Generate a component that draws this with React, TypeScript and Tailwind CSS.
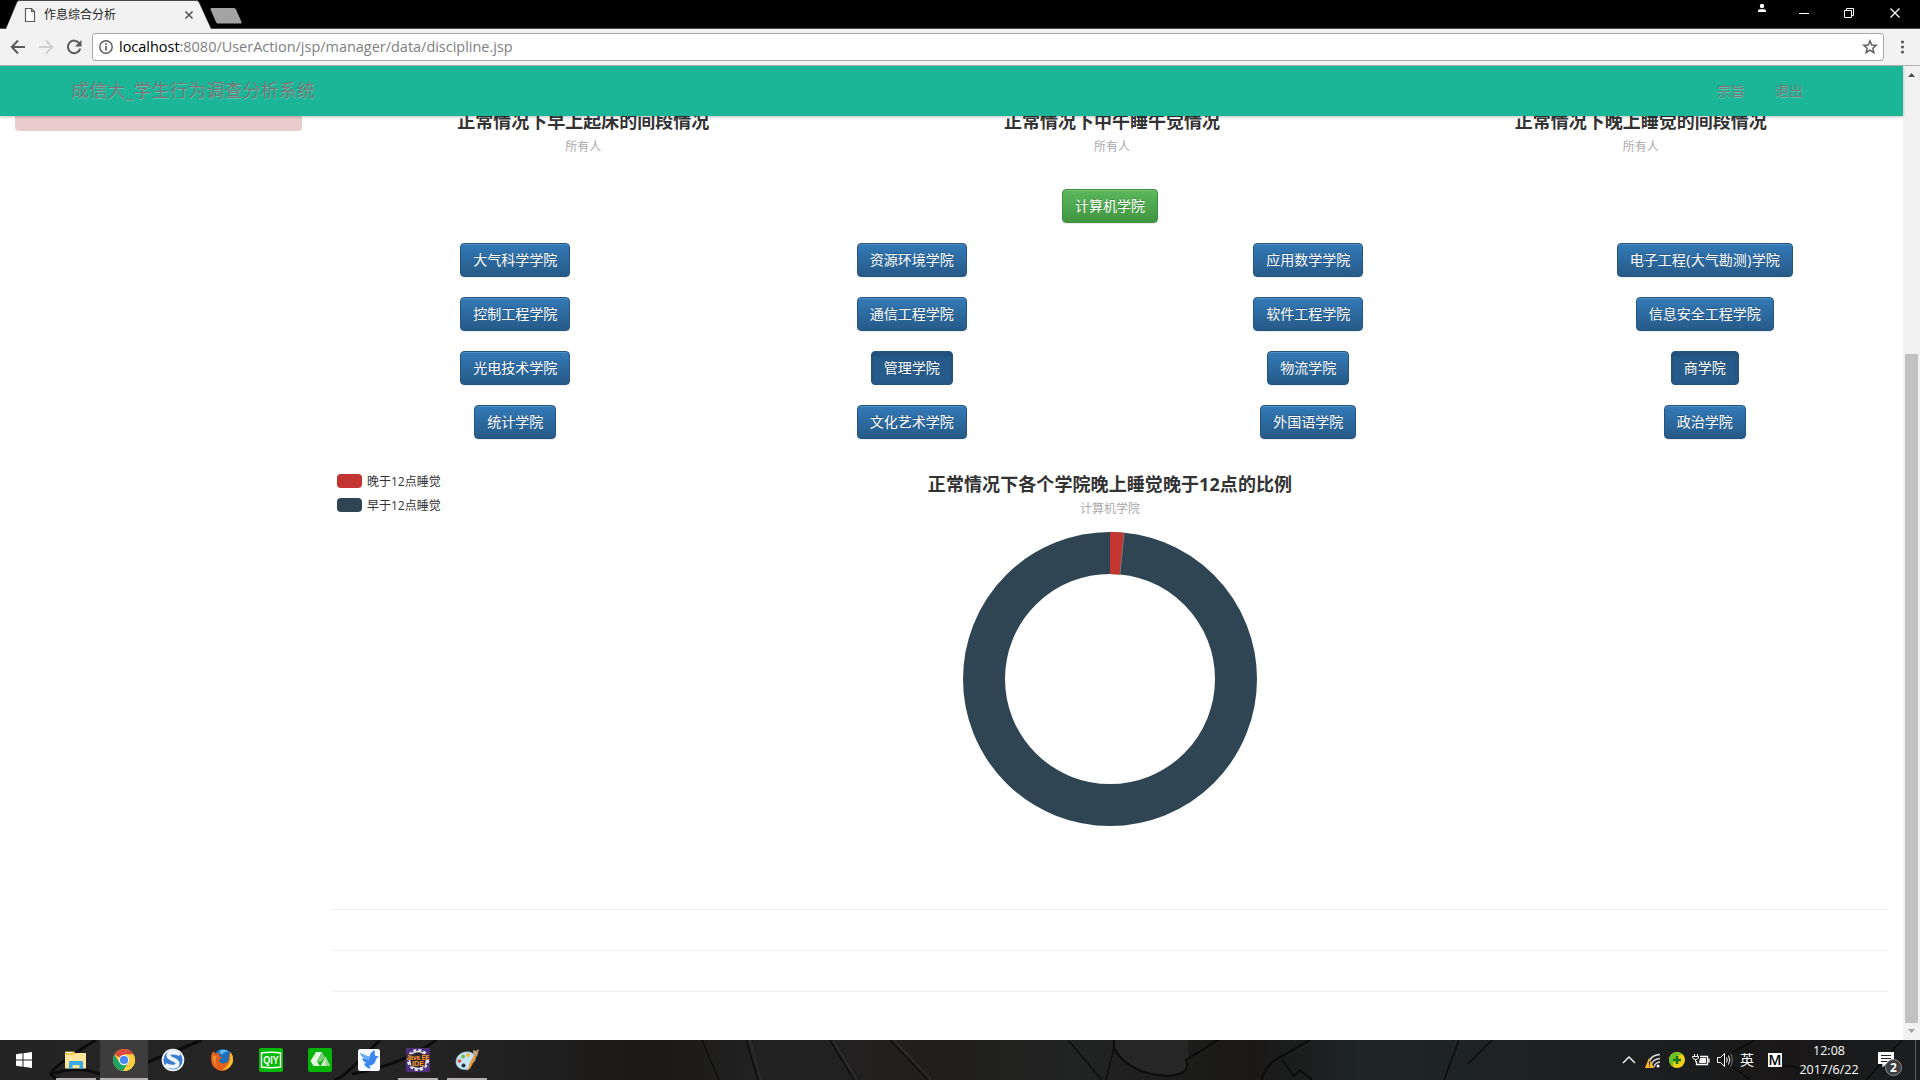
import React from "react";

type College = { name: string; active?: boolean };

const colleges: College[] = [
  { name: "大气科学学院" },
  { name: "资源环境学院" },
  { name: "应用数学学院" },
  { name: "电子工程(大气勘测)学院" },
  { name: "控制工程学院" },
  { name: "通信工程学院" },
  { name: "软件工程学院" },
  { name: "信息安全工程学院" },
  { name: "光电技术学院" },
  { name: "管理学院", active: true },
  { name: "物流学院" },
  { name: "商学院", active: true },
  { name: "统计学院" },
  { name: "文化艺术学院" },
  { name: "外国语学院" },
  { name: "政治学院" },
];

const charts = ["正常情况下早上起床的间段情况", "正常情况下中午睡午觉情况", "正常情况下晚上睡觉的间段情况"];

function TabStrip() {
  return (
    <div className="relative flex h-[29px] bg-black">
      <svg className="absolute left-0 top-0" width="1920" height="29">
        <path d="M0 28.500H6.500L17 2Q17.500 .5 19 .5H197Q198.500 .5 199 2L210.500 28.500H1920" fill="none" stroke="#4a4a4a" />
        <path d="M6 29L17 3Q17.800 1 19 1H197Q198.200 1 199 3L211 29Z" fill="#f2f2f2" />
        <path d="M211.500 8H234Q235.500 8 236 9.500L241.500 22Q242 23.500 240.500 23.500H218Q216.500 23.500 216 22L210.500 9.500Q210 8 211.500 8Z" fill="#a3a3a3" />
        <path d="M25.500 8.500H31.500L34.500 11.500V21.500H25.500ZM31.500 8.500V11.500H34.500" fill="#fff" stroke="#5a5a5a" strokeWidth="1.200" />
        <path d="M185.500 11.500L192.500 18.500M192.500 11.500L185.500 18.500" stroke="#5a5a5a" strokeWidth="1.700" />
      </svg>
      <div className="relative ml-11 mt-[6px] text-[12px] leading-[18px] text-[#222]">作息综合分析</div>
      <svg className="relative ml-auto" width="180" height="28" fill="none" stroke="#fff">
        <circle cx="22" cy="6" r="2.200" fill="#fff" stroke="none" />
        <path d="M18 12V11Q18 9.300 20 9.300H24Q26 9.300 26 11V12Z" fill="#fff" stroke="none" />
        <path d="M59 13.500H69" />
        <path d="M104.500 10.500H111.500V17.500H104.500ZM106.500 10.500V8.500H113.500V15.500H111.500" />
        <path d="M150.500 8.500L159.500 17.500M159.500 8.500L150.500 17.500" strokeWidth="1.300" />
      </svg>
    </div>
  );
}

function Toolbar() {
  return (
    <div className="flex h-[37px] items-center border-b border-[#b4b4b4] bg-[#f2f2f2]">
      <svg width="92" height="36" fill="none" stroke="#5a5a5a" strokeWidth="2">
        <path d="M25 18H12M18 11.500L11.800 18L18 24.500" />
        <path d="M39 18H52M46 11.500L52.200 18L46 24.500" stroke="#d0d0d0" />
        <path d="M79.500 14.500A6.300 6.300 0 1 0 80.300 19.500" />
        <path d="M81.500 11V17.500H75Z" fill="#5a5a5a" stroke="none" />
      </svg>
      <div className="flex h-7 flex-1 items-center rounded-[3px] border border-[#a9a9a9] bg-white pl-[6px] pr-[5px]">
        <svg width="14" height="14" fill="none" stroke="#5a5a5a">
          <circle cx="7" cy="7" r="6.200" strokeWidth="1.400" />
          <path d="M7 6V10.500M7 3.200V4.900" strokeWidth="1.700" />
        </svg>
        <div className="ml-[6px] whitespace-nowrap font-['Open_Sans',sans-serif] text-[14.460px] leading-5 text-[#808080]">
          <span className="text-black">localhost</span>:8080/UserAction/jsp/manager/data/discipline.jsp
        </div>
        <svg className="ml-auto" width="16" height="16" fill="none" stroke="#5a5a5a" strokeWidth="1.400">
          <path d="M8 1.800L9.700 6L14.200 6.300L10.800 9.200L11.900 13.700L8 11.200L4.100 13.700L5.200 9.200L1.800 6.300L6.300 6Z" />
        </svg>
      </div>
      <svg width="36" height="36" fill="#5a5a5a">
        <circle cx="18.500" cy="13" r="1.600" />
        <circle cx="18.500" cy="18" r="1.600" />
        <circle cx="18.500" cy="23" r="1.600" />
      </svg>
    </div>
  );
}

function NavBar() {
  return (
    <div className="relative z-10 flex h-[50px] shrink-0 items-center bg-[#1bb698] pl-[71px] pr-[100px] text-[#777] shadow-[0_1px_3px_rgba(0,0,0,0.25)] [text-shadow:0_1px_0_rgba(255,255,255,0.25)]">
      <div className="mb-[2px] text-[18px] leading-5 tracking-[0.15px]">成信大_学生行为调查分析系统</div>
      <div className="ml-auto flex gap-[30px] text-[14px] leading-5">
        <span>宗旨</span>
        <span>退出</span>
      </div>
    </div>
  );
}

function CollegeButton({ name, active }: College) {
  return (
    <button
      className={
        active
          ? "h-[34px] rounded-[4px] border border-[#245580] bg-[#265a88] px-3 pb-px text-[14px] leading-5 text-white shadow-[inset_0_3px_5px_rgba(0,0,0,0.125)] [text-shadow:0_-1px_0_rgba(0,0,0,0.2)]"
          : "h-[34px] rounded-[4px] border border-[#245580] bg-linear-to-b from-[#337ab7] to-[#265a88] px-3 pb-px text-[14px] leading-5 text-white shadow-[inset_0_1px_0_rgba(255,255,255,0.15),0_1px_1px_rgba(0,0,0,0.075)] [text-shadow:0_-1px_0_rgba(0,0,0,0.2)]"
      }
    >
      {name.split(/([()])/).map((part, i) =>
        part === "(" || part === ")" ? (
          <span key={i} className="px-[0.4px]">{part}</span>
        ) : (
          part
        )
      )}
    </button>
  );
}

function Donut() {
  return (
    <svg className="mx-auto mt-[14px] block" width="294" height="294" viewBox="-147 -147 294 294">
      <circle r="126" fill="none" stroke="#2f4554" strokeWidth="42" />
      <path d="M0 -147A147 147 0 0 1 14 -146.330L10 -104.520A105 105 0 0 0 0 -105Z" fill="#c23531" />
      <path d="M14 -146.330L10 -104.520" stroke="#8d8a8c" strokeWidth=".7" />
    </svg>
  );
}

function Legend({ label, swatch }: { label: string; swatch: string }) {
  return (
    <div className="flex h-6 items-center gap-[5px] text-[12px] text-[#333]">
      <div className={swatch} />
      <span className="mt-px leading-[14px]">{label}</span>
    </div>
  );
}

function PageBody() {
  return (
    <div className="flex min-h-0 flex-1 overflow-hidden bg-white">
      <div className="w-[317px] shrink-0 pl-[15px]">
        <div className="h-[15px] w-[287px] rounded-b-[4px] bg-[#ebcccc]" />
      </div>
      <div className="min-w-0 flex-1">
        <div className="-mr-[2px] ml-[2px] grid h-[73px] grid-cols-3 text-center">
          {charts.map((t) => (
            <div key={t} className="-mt-[9px]">
              <div className="text-[18px] font-bold leading-[28px] text-[#333]">{t}</div>
              <div className="mt-[3px] text-[12px] leading-[18px] text-[#aaa]">所有人</div>
            </div>
          ))}
        </div>
        <div className="flex justify-center">
          <button className="h-[34px] rounded-[4px] border border-[#3e8f3e] bg-linear-to-b from-[#5cb85c] to-[#419641] px-3 pb-px text-[14px] leading-5 text-white shadow-[inset_0_1px_0_rgba(255,255,255,0.15),0_1px_1px_rgba(0,0,0,0.075)] [text-shadow:0_-1px_0_rgba(0,0,0,0.2)]">
            计算机学院
          </button>
        </div>
        <div className="mt-5 grid grid-cols-4 justify-items-center gap-y-5">
          {colleges.map((c) => (
            <CollegeButton key={c.name} {...c} />
          ))}
        </div>
        <div className="relative mt-[30px] h-[440px]">
          <div className="absolute left-5 top-0">
            <Legend label="晚于12点睡觉" swatch="h-[14px] w-[25px] rounded-[4px] bg-[#c23531]" />
            <Legend label="早于12点睡觉" swatch="h-[14px] w-[25px] rounded-[4px] bg-[#2f4554]" />
          </div>
          <div className="pt-px text-center text-[18px] font-bold leading-[28px] tracking-[0.08px] text-[#333]">正常情况下各个学院晚上睡觉晚于12点的比例</div>
          <div className="mt-[2px] text-center text-[12px] leading-[18px] text-[#aaa]">计算机学院</div>
          <Donut />
        </div>
        <div className="mx-[15px] flex flex-col gap-10">
          <div className="h-px bg-[#eee]" />
          <div className="h-px bg-[#eee]" />
          <div className="h-px bg-[#eee]" />
        </div>
      </div>
    </div>
  );
}

function ScrollBar() {
  return (
    <div className="flex w-[17px] shrink-0 flex-col items-center bg-[#f1f1f1]">
      <svg width="17" height="17"><path d="M5 11H12L8.500 7Z" fill="#505050" /></svg>
      <div className="mt-[271px] h-[669px] w-[13px] bg-[#c1c1c1]" />
      <svg width="17" height="17"><path d="M5 6H12L8.500 10Z" fill="#a3a3a3" /></svg>
    </div>
  );
}

function Wallpaper() {
  return (
    <svg className="absolute inset-0" width="1920" height="40" fill="none" stroke="#0c0c0c" strokeWidth="3">
      <defs>
        <linearGradient id="wall">
          <stop offset="0" stopColor="#242424" />
          <stop offset=".2" stopColor="#252525" />
          <stop offset=".27" stopColor="#212020" />
          <stop offset=".34" stopColor="#1a1918" />
          <stop offset=".4" stopColor="#232222" />
          <stop offset=".5" stopColor="#201f1e" />
          <stop offset=".56" stopColor="#222323" />
          <stop offset=".65" stopColor="#191817" />
          <stop offset=".71" stopColor="#202526" />
          <stop offset=".85" stopColor="#1c1f20" />
          <stop offset=".93" stopColor="#191718" />
          <stop offset="1" stopColor="#1b1e1f" />
        </linearGradient>
      </defs>
      <rect width="1920" height="40" fill="url(#wall)" stroke="none" />
      <path d="M1114 8Q1128 34 1168 36Q1192 34 1188 20V0H1114Z" fill="#252625" stroke="none" />
      <path d="M96 0Q66 18 52 31Q48 37 62 40M52 34Q80 24 104 36L148 22L202 0M380 0L360 20Q340 40 334 40M436 0Q405 24 352 34" />
      <path d="M702 0L719 40M746 0L758 40M830 0L854 40M890 0L928 40M1068 0L1102 40M1114 8L1106 40" strokeWidth="1.200" />
      <path d="M1114 0V8Q1128 34 1168 36Q1192 34 1186 20L1218 0M1310 0L1272 22Q1262 34 1262 40M1282 20L1294 36L1300 30L1312 40" strokeWidth="2" />
      <path d="M1459 0L1444 40M1492 0L1468 24M1755 0L1722 18L1750 40M1902 0L1866 40M1770 26H1790L1840 40" strokeWidth="1.500" />
      <path d="M750 0L761 40M833 0L857 40M894 0L931 40" stroke="#2e2e2e" strokeWidth="1.500" />
    </svg>
  );
}

function WindowsIcon() {
  return (
    <svg width="16" height="16" fill="#fff">
      <path d="M0 2.200L6.500 1.300V7.500H0ZM7.500 1.200L16 0V7.500H7.500ZM0 8.500H6.500V14.700L0 13.800ZM7.500 8.500H16V16L7.500 14.800Z" />
    </svg>
  );
}

function FolderIcon() {
  return (
    <svg width="24" height="24">
      <path d="M1 3.500H10L11.500 5H21V20H1Z" fill="#f5c953" />
      <path d="M1 7H10L12 5H22V20.500H1Z" fill="#fee59a" />
      <path d="M3 4.500H8" stroke="#fff" />
      <path d="M5 14Q5 13 6 13H18Q19 13 19 14V21H15.500V17H8.500V21H5Z" fill="#35a9e4" />
    </svg>
  );
}

function ChromeIcon() {
  return (
    <svg width="24" height="24" viewBox="0 0 24 24">
      <circle cx="12" cy="12" r="11" fill="#ffcd42" />
      <path d="M12 12L2.470 6.500A11 11 0 0 1 21.530 6.500H12Z" fill="#dd4b3e" />
      <path d="M2.470 6.500A11 11 0 0 0 11 23L16.500 14.500L12 12L7 14Z" fill="#1da362" />
      <path d="M21.530 6.500H12L16.800 14.800L11 23A11 11 0 0 0 21.530 6.500Z" fill="#ffcd42" />
      <circle cx="12" cy="12" r="5.200" fill="#f1f1f1" />
      <circle cx="12" cy="12" r="4.100" fill="#4a8af4" />
    </svg>
  );
}

function SogouIcon() {
  return (
    <svg width="24" height="24">
      <circle cx="12" cy="12" r="11.300" fill="#f3f7fb" />
      <circle cx="12" cy="12" r="9.600" fill="#3c7fd0" />
      <path d="M19 6Q8 2.500 7.500 7.500C7.500 12 17 11 16.500 16C16 19.500 10 19.500 4.500 17" fill="none" stroke="#f3f7fb" strokeWidth="4" />
    </svg>
  );
}

function FirefoxIcon() {
  return (
    <svg width="24" height="24">
      <circle cx="13" cy="11" r="10" fill="#1c6fb8" />
      <path d="M9 3Q14 0 19 4Q14 3 12 7Z" fill="#5cc0ee" />
      <path d="M3 3L6 6Q8 4.500 10 5L9 8L12 9.500L9 12Q10 16 14 15.500Q20 14 19 7L20.500 4Q24 9 22.500 15Q19 23 11.500 23Q1 21 1 11Q1 6 3 3Z" fill="#e2601b" />
      <path d="M20.500 4Q24 9 22.500 15Q19 22 12 22Q19 18 20 11Z" fill="#fbbf2c" />
      <path d="M3 8Q2 15 7 19Q4 12 7 8Z" fill="#f58e2c" />
    </svg>
  );
}

function QiyiIcon() {
  return (
    <svg width="24" height="24">
      <rect width="24" height="24" rx="2" fill="#06b806" />
      <path d="M2.500 5Q12 3.500 21.500 5V19Q12 20.500 2.500 19Z" fill="none" stroke="#fff" strokeWidth="1.400" />
      <text x="12" y="16" fill="#fff" fontSize="10.500" fontWeight="700" textAnchor="middle" textLength="15.500" lengthAdjust="spacingAndGlyphs" fontFamily="Liberation Sans, sans-serif">QIY</text>
    </svg>
  );
}

function DriveIcon() {
  return (
    <svg width="24" height="24">
      <rect width="24" height="24" rx="2" fill="#09b40a" />
      <path d="M8 4H14L9 13.500L12 18H5.500L2.500 13Z" fill="#e4f6e2" />
      <path d="M14 4L17 9.500L12.500 14L9 13.500Z" fill="#7ccb78" />
      <path d="M12.500 18L17.500 8.500L22 18Z" fill="#c9ecc6" />
      <path d="M17.500 8.500L22 18H18Z" fill="#94d491" />
    </svg>
  );
}

function BirdIcon() {
  return (
    <svg width="24" height="24">
      <rect x="1" y="1" width="22" height="22" rx="2" fill="#f7faff" />
      <path d="M3 5L12.500 9Q13.500 3 18 2.500Q17 6 18.500 8L22 8.500L19 11Q18 17 12.500 17.500L13.500 21Q8 19 7 15.500L10 15Q6 14 5 10.500L8 10.500Q4 8 3 5Z" fill="#3a85ee" />
      <path d="M3 5L12.500 9L12 13Q5 10 3 5Z" fill="#67aaf7" />
    </svg>
  );
}

function JavaIcon() {
  return (
    <svg width="24" height="24">
      <rect width="24" height="24" fill="#4a3179" />
      <circle cx="12" cy="12" r="9.800" fill="none" stroke="#e4e2e8" strokeWidth="2.600" strokeDasharray="3.100 2.030" />
      <circle cx="12" cy="12" r="8.500" fill="#2b2430" stroke="#e4e2e8" strokeWidth="1.600" />
      <path d="M0 6H24V12H0ZM5 12.500H19V18.500H5Z" fill="#3a2530" fillOpacity=".8" />
      <g fill="#ff9a2e" fontFamily="Liberation Sans, sans-serif" fontWeight="700" textAnchor="middle">
        <text x="12" y="11.500" fontSize="7.500" textLength="23" lengthAdjust="spacingAndGlyphs">Java EE</text>
        <text x="12" y="18.300" fontSize="7.500" textLength="12" lengthAdjust="spacingAndGlyphs">IDE</text>
      </g>
    </svg>
  );
}

function PaintIcon() {
  return (
    <svg width="24" height="24">
      <path d="M1 14C1 7 8 3 14 4C20 5 21 9 20 12C19 15 17 13 15.500 15C14 17 17 19 14 21C10 23 1 21 1 14Z" fill="#c5e4f3" stroke="#8cb9d2" strokeWidth=".6" />
      <circle cx="4.500" cy="13" r="1.800" fill="#de4937" />
      <circle cx="8" cy="8.500" r="1.900" fill="#73b94c" />
      <circle cx="13" cy="7" r="1.900" fill="#f2b632" />
      <circle cx="8.500" cy="17.500" r="2" fill="#27333a" />
      <path d="M12 23Q14 19 14.500 16L19 7L21.500 8.500L16.500 18Q15 21 12 23Z" fill="#e69634" />
      <path d="M18.500 7L18 2L21 3L24 1L22 8.500Z" fill="#c9a27b" />
    </svg>
  );
}

const apps = [
  { icon: <FolderIcon />, open: true, margin: "ml-[7px]" },
  { icon: <ChromeIcon />, focused: true, margin: "ml-[1px]" },
  { icon: <SogouIcon />, margin: "ml-[1px]" },
  { icon: <FirefoxIcon />, margin: "ml-[1px]" },
  { icon: <QiyiIcon />, margin: "ml-[1px]" },
  { icon: <DriveIcon />, margin: "ml-[1px]" },
  { icon: <BirdIcon />, margin: "ml-[1px]" },
  { icon: <JavaIcon />, open: true, margin: "ml-[1px]" },
  { icon: <PaintIcon />, open: true, margin: "ml-[1px]" },
] as { icon: React.ReactNode; open?: boolean; focused?: boolean; margin: string }[];

function Tray() {
  return (
    <div className="relative ml-auto flex h-full items-center text-white">
      <svg width="124" height="40" fill="none" stroke="#fff">
        <path d="M7 23L13 17L19 23" strokeWidth="1.400" />
        <path d="M31 27Q33 15 44 14.500M34.500 27Q36 19 44 18.500M38 27Q39 22.500 44 22" strokeWidth="1.300" stroke="#d5d5d5" />
        <circle cx="42" cy="26" r="1.500" fill="#fff" stroke="none" />
        <path d="M33 18L38 28H29Z" fill="#fdb81e" stroke="none" />
        <path d="M33.500 21V25M33.500 26V27" stroke="#222" />
        <circle cx="61" cy="20" r="8" fill="#f0cf18" stroke="none" />
        <path d="M53 20A8 8 0 0 1 67 15Q61 14 58 20Q56 25 58 27A8 8 0 0 1 53 20Z" fill="#68c527" stroke="none" />
        <path d="M61 16V24M57 20H65" stroke="#16761b" strokeWidth="2.600" />
        <path d="M84 16.500H91.500V24.500H80.500V21M93 18.500V22.500" strokeWidth="1.300" />
        <path d="M84.500 18.500H89.500V22.500H83.500Z" fill="#fff" />
        <path d="M78.500 14V16M81.500 14V16M76.500 16.500H82.500V18Q82 19.500 79.500 19.500Q77 19.500 76.500 17ZM79.500 19V22" />
        <path d="M101.500 17.500H104.500L108.500 13.500V26.500L104.500 22.500H101.500ZM110.500 17.500Q112 20 110.500 22.500M112.500 15.500Q115 20 112.500 24.500" />
        <path d="M114.500 13.500Q118 20 114.500 26.500" stroke="#777" />
      </svg>
      <div className="w-[14px] text-[14px] leading-5">英</div>
      <div className="ml-[14px] h-[14px] w-[14px] bg-white text-center font-['Open_Sans',sans-serif] text-[14px] font-semibold leading-[14px] text-black">M</div>
      <div className="ml-[16px] w-[62px] text-center font-['Open_Sans',sans-serif] text-[12.500px] leading-[19px]">
        <div>12:08</div>
        <div>2017/6/22</div>
      </div>
      <svg className="ml-[18px]" width="37" height="40">
        <path d="M0 12H16V24H8L4.500 27.500V24H0Z" fill="#fff" />
        <path d="M3 15.500H13M3 18.500H13M3 21.500H9" stroke="#222" />
        <circle cx="15.500" cy="27.500" r="8" fill="#3b3d3e" stroke="#8b8d8e" />
        <text x="15.500" y="32" fill="#fff" fontSize="12" fontWeight="700" textAnchor="middle" fontFamily="Open Sans, sans-serif">2</text>
      </svg>
      <div className="h-full w-[5px] border-l border-[#5b5d5e]" />
    </div>
  );
}

function TaskBar() {
  return (
    <div className="relative flex h-10 items-center bg-[#222]">
      <Wallpaper />
      <div className="relative flex w-[45px] justify-center pl-[3px]">
        <WindowsIcon />
      </div>
      <div className="relative flex h-full">
        {apps.map((a, i) => (
          <div
            key={i}
            className={`${a.margin} ${a.focused ? "bg-[#3d3d3d]" : ""} ${i === 0 ? "w-[47px]" : "w-12"} flex h-full flex-col items-center`}
          >
            <div className="mt-2 h-6 w-6">{a.icon}</div>
            {(a.open || a.focused) && <div className={`${a.focused ? "w-full" : "w-10"} mt-[6px] h-[2px] bg-[#b4afb1]`} />}
          </div>
        ))}
      </div>
      <Tray />
    </div>
  );
}

export default function App() {
  return (
    <div className="flex h-[1080px] w-[1920px] flex-col overflow-hidden bg-white font-['Open_Sans','Noto_Sans_CJK_SC',sans-serif]">
      <TabStrip />
      <Toolbar />
      <div className="flex min-h-0 flex-1">
        <div className="flex min-w-0 flex-1 flex-col">
          <NavBar />
          <PageBody />
        </div>
        <ScrollBar />
      </div>
      <TaskBar />
    </div>
  );
}
